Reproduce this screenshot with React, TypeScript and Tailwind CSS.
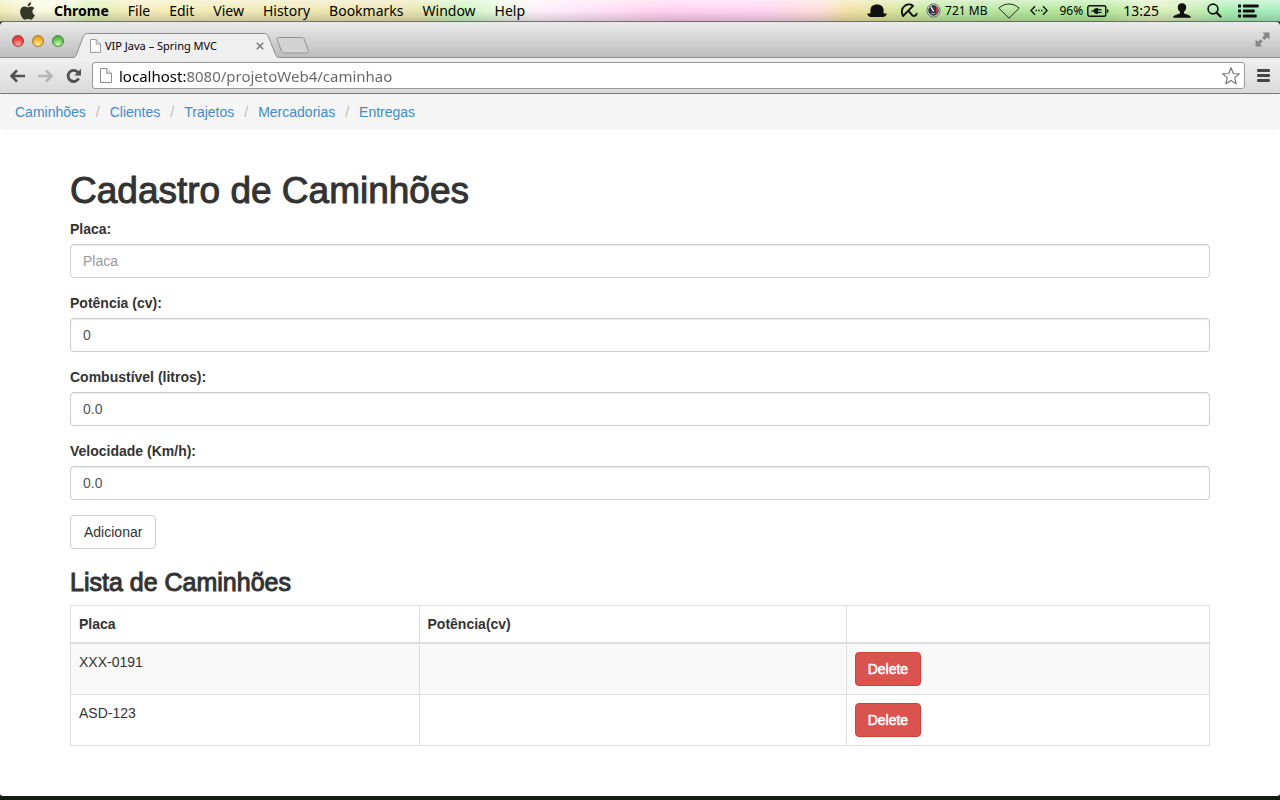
import React from "react";
import { FaApple } from "react-icons/fa";

const menus = ["File", "Edit", "View", "History", "Bookmarks", "Window", "Help"];
const links = ["Caminhões", "Clientes", "Trajetos", "Mercadorias", "Entregas"];
const fields = [
  { id: "placa", label: "Placa:", placeholder: "Placa", value: "" },
  { id: "potencia", label: "Potência (cv):", placeholder: "", value: "0" },
  { id: "combustivel", label: "Combustível (litros):", placeholder: "", value: "0.0" },
  { id: "velocidade", label: "Velocidade (Km/h):", placeholder: "", value: "0.0" },
];
const trucks = [
  { placa: "XXX-0191", potencia: "" },
  { placa: "ASD-123", potencia: "" },
];

function HatIcon() {
  return (
    <svg width="20" height="14" viewBox="0 0 20 14" fill="#111" aria-hidden="true">
      <path d="M3.400 9.500V6.500C3.400 2.500 5.500.4 10 .4s6.600 2.100 6.600 6.100v3c1 .2 2.300-.1 3.100.2-.2 1.900-1.900 3.300-3.700 3.400H4C2.200 13 .5 11.600.3 9.700c.8-.3 2.100 0 3.100-.2z" />
    </svg>
  );
}

function UmbrellaIcon() {
  return (
    <svg width="17" height="15" viewBox="0 0 17 15" fill="none" stroke="#111" strokeWidth="1.900" strokeLinecap="round" strokeLinejoin="round" aria-hidden="true">
      <path d="M2 13C.4 9.500.8 5.500 3.200 3.400 5.600 1.200 9.300.9 12 2.800L2 13zM7.300 7.700l3.600 4.200c1.300 1.800 4.300 1.200 4.700-1.200" />
    </svg>
  );
}

function GaugeIcon() {
  return (
    <svg width="15" height="15" viewBox="0 0 15 15" aria-hidden="true">
      <circle cx="7.500" cy="7.500" r="6.600" fill="#e8e8e8" stroke="#666" />
      <circle cx="7.500" cy="7.500" r="4.900" fill="#2c3a44" stroke="#222" strokeWidth=".6" />
      <path d="M5 3.800l2.700 4.700" stroke="#fff" strokeWidth="1.400" />
      <path d="M10.200 4.500c1.200 1.500 1.300 3.800.1 5.500" stroke="#e03a30" strokeWidth="1.400" fill="none" />
      <path d="M5 10.600h4" stroke="#9ab" strokeWidth="1" />
    </svg>
  );
}

function WifiIcon() {
  return (
    <svg width="22" height="16" viewBox="0 0 22 16" fill="none" stroke="#222" strokeLinejoin="round" aria-hidden="true">
      <path d="M.8 5.200C6.500-.4 15.500-.4 21.200 5.200L11 15.200z" />
    </svg>
  );
}

function EthernetIcon() {
  return (
    <svg width="18" height="11" viewBox="0 0 18 11" fill="none" stroke="#111" strokeWidth="1.400" aria-hidden="true">
      <path d="M5 1.200.9 5.500 5 9.800M13 1.200l4.100 4.300L13 9.800" />
      <path d="M5.500 5.500h7.200" strokeDasharray="1.400 1.400" />
    </svg>
  );
}

function BatteryIcon() {
  return (
    <svg width="22" height="12" viewBox="0 0 22 12" aria-hidden="true">
      <rect x=".8" y=".8" width="18" height="10.400" rx="1.800" fill="none" stroke="#111" strokeWidth="1.400" />
      <path d="M20 4c2 .3 2 3.700 0 4z" fill="#111" />
      <path d="M4 5.400h2.400C7 3.400 9 2.800 11 3v1h3.500v1.200H11v1.600h3.500V8H11v1C9 9.200 7 8.600 6.400 6.600H4z" fill="#111" />
    </svg>
  );
}

function PersonIcon() {
  return (
    <svg width="18" height="15" viewBox="0 0 18 15" fill="#111" aria-hidden="true">
      <path d="M9 .2c2.800 0 4.400 1.700 4.200 4.200-.1 2-1 3.500-2.200 4.400v1.500c1 1.300 6.700 1 6.900 4.500H.1C.3 11.300 6 11.600 7 10.300V8.800C5.800 7.900 4.900 6.400 4.800 4.400 4.600 1.900 6.200.2 9 .2z" />
    </svg>
  );
}

function SearchIcon() {
  return (
    <svg width="15" height="15" viewBox="0 0 15 15" fill="none" stroke="#111" aria-hidden="true">
      <circle cx="6" cy="6" r="4.900" strokeWidth="1.600" />
      <path d="M9.500 9.500l4 4" strokeWidth="2.400" strokeLinecap="round" />
    </svg>
  );
}

function ListIcon() {
  return (
    <svg width="22" height="14" viewBox="0 0 22 14" fill="#111" aria-hidden="true">
      <path d="M0 .5h3v3H0zM0 5.500h3v3H0zM0 10.500h3v3H0z" />
      <rect x="4.800" y=".5" width="16" height="3" rx="1" />
      <rect x="4.800" y="5.500" width="12" height="3" rx="1" />
      <rect x="4.800" y="10.500" width="14" height="3" rx="1" />
    </svg>
  );
}

function MenuBar() {
  return (
    <header className="flex h-[22px] shrink-0 items-center justify-between whitespace-nowrap border-b border-black/55 bg-[linear-gradient(to_bottom,rgba(255,255,255,0.5),rgba(255,255,255,0)_50%,rgba(0,0,0,0.15)),linear-gradient(to_right,#f0ecb4_0%,#fbfbe4_3%,#f6f8dc_5%,#d9f0b0_7%,#f3edb9_10%,#ebe4b0_32%,#c9f5bd_36%,#e6f8dd_39%,#fff0fb_42%,#ffe0f5_47%,#ffd0ee_52%,#ffd2f2_59%,#fbdcd8_64%,#f4e2a8_66%,#dfe39c_69%,#bbe8a2_74%,#b2e79a_86%,#dff0bd_90%,#cbedb6_93%,#a6eeb0_96%,#a6eec0_100%)] px-5 text-sm leading-[20px] text-black">
      <nav className="flex items-center gap-[19px]" aria-label="Menu">
        <FaApple className="h-5 w-[15px] text-[#34382b]" />
        <button className="font-bold">Chrome</button>
        {menus.map((m) => (
          <button key={m}>{m}</button>
        ))}
      </nav>
      <div className="flex items-center">
        <HatIcon />
        <span className="ml-3.5"><UmbrellaIcon /></span>
        <span className="ml-2"><GaugeIcon /></span>
        <span className="ml-1 text-xs">721 MB</span>
        <span className="ml-2.5"><WifiIcon /></span>
        <span className="ml-2.5"><EthernetIcon /></span>
        <span className="ml-3 text-xs">96%</span>
        <span className="ml-1"><BatteryIcon /></span>
        <time className="ml-3.5">13:25</time>
        <span className="ml-3.5"><PersonIcon /></span>
        <span className="ml-4"><SearchIcon /></span>
        <span className="ml-4"><ListIcon /></span>
      </div>
    </header>
  );
}

function TitleBar() {
  return (
    <div className="flex h-9 shrink-0 items-end justify-between rounded-t-[4px] border-b border-[#8f8f8f] bg-linear-to-b from-[#ebebeb] to-[#bdbdbd] pl-3 pr-2.5">
      <div className="flex items-end">
        <div className="flex gap-2 pb-2.5">
          <button aria-label="Close window" className="size-3 rounded-full border border-[#a33a38] bg-[radial-gradient(circle_at_50%_85%,#ffb0a8,#ee4b4b_50%,#c62a2d)]" />
          <button aria-label="Minimize" className="size-3 rounded-full border border-[#a8762a] bg-[radial-gradient(circle_at_50%_85%,#fff0a0,#f6b63c_50%,#cf8a20)]" />
          <button aria-label="Zoom window" className="size-3 rounded-full border border-[#47893a] bg-[radial-gradient(circle_at_50%_85%,#d8ffb8,#6cc858_50%,#3f9a38)]" />
        </div>
        <div className="relative -mb-px ml-2.5 flex h-[25px] w-[206px] items-center pl-4 pr-4">
          <svg className="absolute inset-0" width="206" height="25" viewBox="0 0 206 25" aria-hidden="true">
            <path d="M-2 24.500c2.500 0 3.500-.6 4.500-3L9 4C10 1.500 11 .5 13.500.5H190c2.500 0 3.500 1 4.500 3.500l7 17.500c1 2.400 2 3 4.500 3v.5H-2z" fill="#efefef" />
            <path d="M-2 24.500c2.500 0 3.500-.6 4.500-3L9 4C10 1.500 11 .5 13.500.5H190c2.500 0 3.500 1 4.500 3.500l7 17.500c1 2.400 2 3 4.500 3" fill="none" stroke="#8f8f8f" />
          </svg>
          <div className="relative flex w-full items-center gap-1">
            <svg width="11" height="14" viewBox="0 0 12 15" fill="#fff" stroke="#8c8c8c" aria-hidden="true">
              <path d="M.5.5h6.300l4.700 4.700v9.300H.5z" />
              <path d="M6.800.5v4.700h4.700" fill="#eee" />
            </svg>
            <span className="flex-1 whitespace-nowrap text-[11px] leading-[16px] text-black">VIP Java – Spring MVC</span>
            <button aria-label="Close tab">
              <svg width="8" height="8" viewBox="0 0 8 8" stroke="#777" strokeWidth="1.500" aria-hidden="true">
                <path d="M.8.8l6.400 6.400M7.200.8.8 7.200" />
              </svg>
            </button>
          </div>
        </div>
        <button aria-label="New tab" className="-ml-1 mb-[3px]">
          <svg width="33" height="17" viewBox="0 0 33 17" aria-hidden="true">
            <path d="M2.500.5h23c1.500 0 2.300.6 2.900 2l3.700 11c.6 1.700 0 2.500-1.500 2.500H8.500c-1.600 0-2.500-.7-3.100-2.200L1 2.500C.5 1.300 1 .5 2.500.5z" fill="#d3d3d3" stroke="#8f8f8f" />
          </svg>
        </button>
      </div>
      <button aria-label="Full screen" className="mb-2.5">
        <svg width="15" height="15" viewBox="0 0 15 15" fill="#858585" aria-hidden="true">
          <path d="M7.500.5h7v7L12 5.200 9.300 7.900 7 5.600 9.800 3zM7 14.500H.5v-7L3 9.800l2.500-2.600 2.300 2.300L5.100 12z" />
        </svg>
      </button>
    </div>
  );
}

function Toolbar() {
  return (
    <div className="flex h-9 shrink-0 items-center border-b border-[#777] bg-linear-to-b from-[#f0f0f0] to-[#d9d9d9] px-2.5">
      <button aria-label="Back">
        <svg width="16" height="14" viewBox="0 0 16 14" fill="none" stroke="#505050" strokeWidth="2.600" strokeLinejoin="round" aria-hidden="true">
          <path d="M15 7H1.500M7 1.400 1.500 7 7 12.600" />
        </svg>
      </button>
      <button aria-label="Forward" className="ml-3">
        <svg width="16" height="14" viewBox="0 0 16 14" fill="none" stroke="#b5b5b5" strokeWidth="2.600" strokeLinejoin="round" aria-hidden="true">
          <path d="M0 7h13.500M8 1.400 13.500 7 8 12.600" />
        </svg>
      </button>
      <button aria-label="Reload" className="ml-3">
        <svg width="16" height="16" viewBox="0 0 16 16" aria-hidden="true">
          <path d="M12 4.300A5.600 5.600 0 1 0 12.700 10.400" fill="none" stroke="#505050" strokeWidth="2.800" />
          <path d="M15 .8v6.600H8.400z" fill="#505050" />
        </svg>
      </button>
      <div className="ml-2.5 flex h-[27px] flex-1 items-center rounded-[3px] border border-[#9a9a9a] bg-white pl-[7px] pr-1">
        <svg width="12" height="15" viewBox="0 0 12 15" fill="#fff" stroke="#8c8c8c" aria-hidden="true">
          <path d="M.5.5h6.300l4.700 4.700v9.300H.5z" />
          <path d="M6.800.5v4.700h4.700" fill="#eee" />
        </svg>
        <input
          aria-label="Address"
          defaultValue="localhost:8080/projetoWeb4/caminhao"
          className="ml-[7px] h-6 min-w-0 flex-1 bg-[linear-gradient(to_right,#000_66px,#666_66px)] bg-clip-text text-[15px] leading-[24px] text-transparent caret-black outline-none"
        />
        <button aria-label="Bookmark">
          <svg width="18" height="18" viewBox="0 0 18 18" fill="#fff" stroke="#777" strokeWidth="1.200" strokeLinejoin="round" aria-hidden="true">
            <path d="M9 .8l2.300 5.700 6 .4-4.600 4 1.500 5.900L9 13.600l-5.200 3.200 1.500-5.900-4.600-4 6-.4z" />
          </svg>
        </button>
      </div>
      <button aria-label="Chrome menu" className="ml-3">
        <svg width="13" height="14" viewBox="0 0 13 14" fill="#454545" aria-hidden="true">
          <rect x="0" y="0" width="13" height="3" rx="1.200" />
          <rect x="0" y="5" width="13" height="3" rx="1.200" />
          <rect x="0" y="10" width="13" height="3" rx="1.200" />
        </svg>
      </button>
    </div>
  );
}

function Page() {
  return (
    <main className="flex-1 rounded-b-[3px] bg-white pb-12 font-['Liberation_Sans',Arial,sans-serif] text-sm leading-[20px] text-[#333]">
      <nav aria-label="Breadcrumb">
        <ol className="flex rounded-[4px] bg-[#f5f5f5] px-[15px] py-2">
          {links.map((l, i) => (
            <li key={l} className="flex">
              {i > 0 && <span className="px-2.5 text-[#bbb]">/</span>}
              <a href="#" className="text-[#428bca]">{l}</a>
            </li>
          ))}
        </ol>
      </nav>
      <div className="mx-auto mt-10 max-w-[1170px] px-[15px]">
        <h1 className="mb-[7px] text-[37px] font-normal leading-[42px] [-webkit-text-stroke:1px_#333]">Cadastro de Caminhões</h1>
        <form onSubmit={(e) => e.preventDefault()}>
          {fields.map((f) => (
            <div key={f.id} className="mb-[15px]">
              <label htmlFor={f.id} className="mb-[5px] block font-bold">{f.label}</label>
              <input
                id={f.id}
                defaultValue={f.value}
                placeholder={f.placeholder}
                className="block h-[34px] w-full rounded-[4px] border border-[#ccc] bg-white px-3 py-1.5 text-[#555] shadow-[inset_0_1px_1px_rgba(0,0,0,0.075)] placeholder:text-[#999]"
              />
            </div>
          ))}
          <button type="submit" className="block h-[34px] rounded-[4px] border border-[#ccc] bg-white px-[13px]">Adicionar</button>
        </form>
        <h3 className="mb-2.5 mt-5 text-[25px] font-normal leading-[26px] [-webkit-text-stroke:1px_#333]">Lista de Caminhões</h3>
        <table className="w-full table-fixed border-collapse border border-[#ddd] text-left">
          <thead>
            <tr className="border-b-2 border-[#ddd]">
              <th className="w-[30.6%] border-x border-[#ddd] p-2 font-bold">Placa</th>
              <th className="w-[37.5%] border-x border-[#ddd] p-2 font-bold">Potência(cv)</th>
              <th className="border-x border-[#ddd] p-2" />
            </tr>
          </thead>
          <tbody>
            {trucks.map((t) => (
              <tr key={t.placa} className="align-top odd:bg-[#f9f9f9]">
                <td className="border border-[#ddd] p-2">{t.placa}</td>
                <td className="border border-[#ddd] p-2">{t.potencia}</td>
                <td className="border border-[#ddd] p-2">
                  <button className="block h-[34px] rounded-[4px] border border-[#d43f3a] bg-[#d9534f] px-3 text-white [-webkit-text-stroke:0.5px_#fff]">Delete</button>
                </td>
              </tr>
            ))}
          </tbody>
        </table>
      </div>
    </main>
  );
}

export default function App() {
  return (
    <div className="flex min-h-screen flex-col bg-[#141f14] pb-1 font-['Noto_Sans','Open_Sans',sans-serif]">
      <MenuBar />
      <TitleBar />
      <Toolbar />
      <Page />
    </div>
  );
}
